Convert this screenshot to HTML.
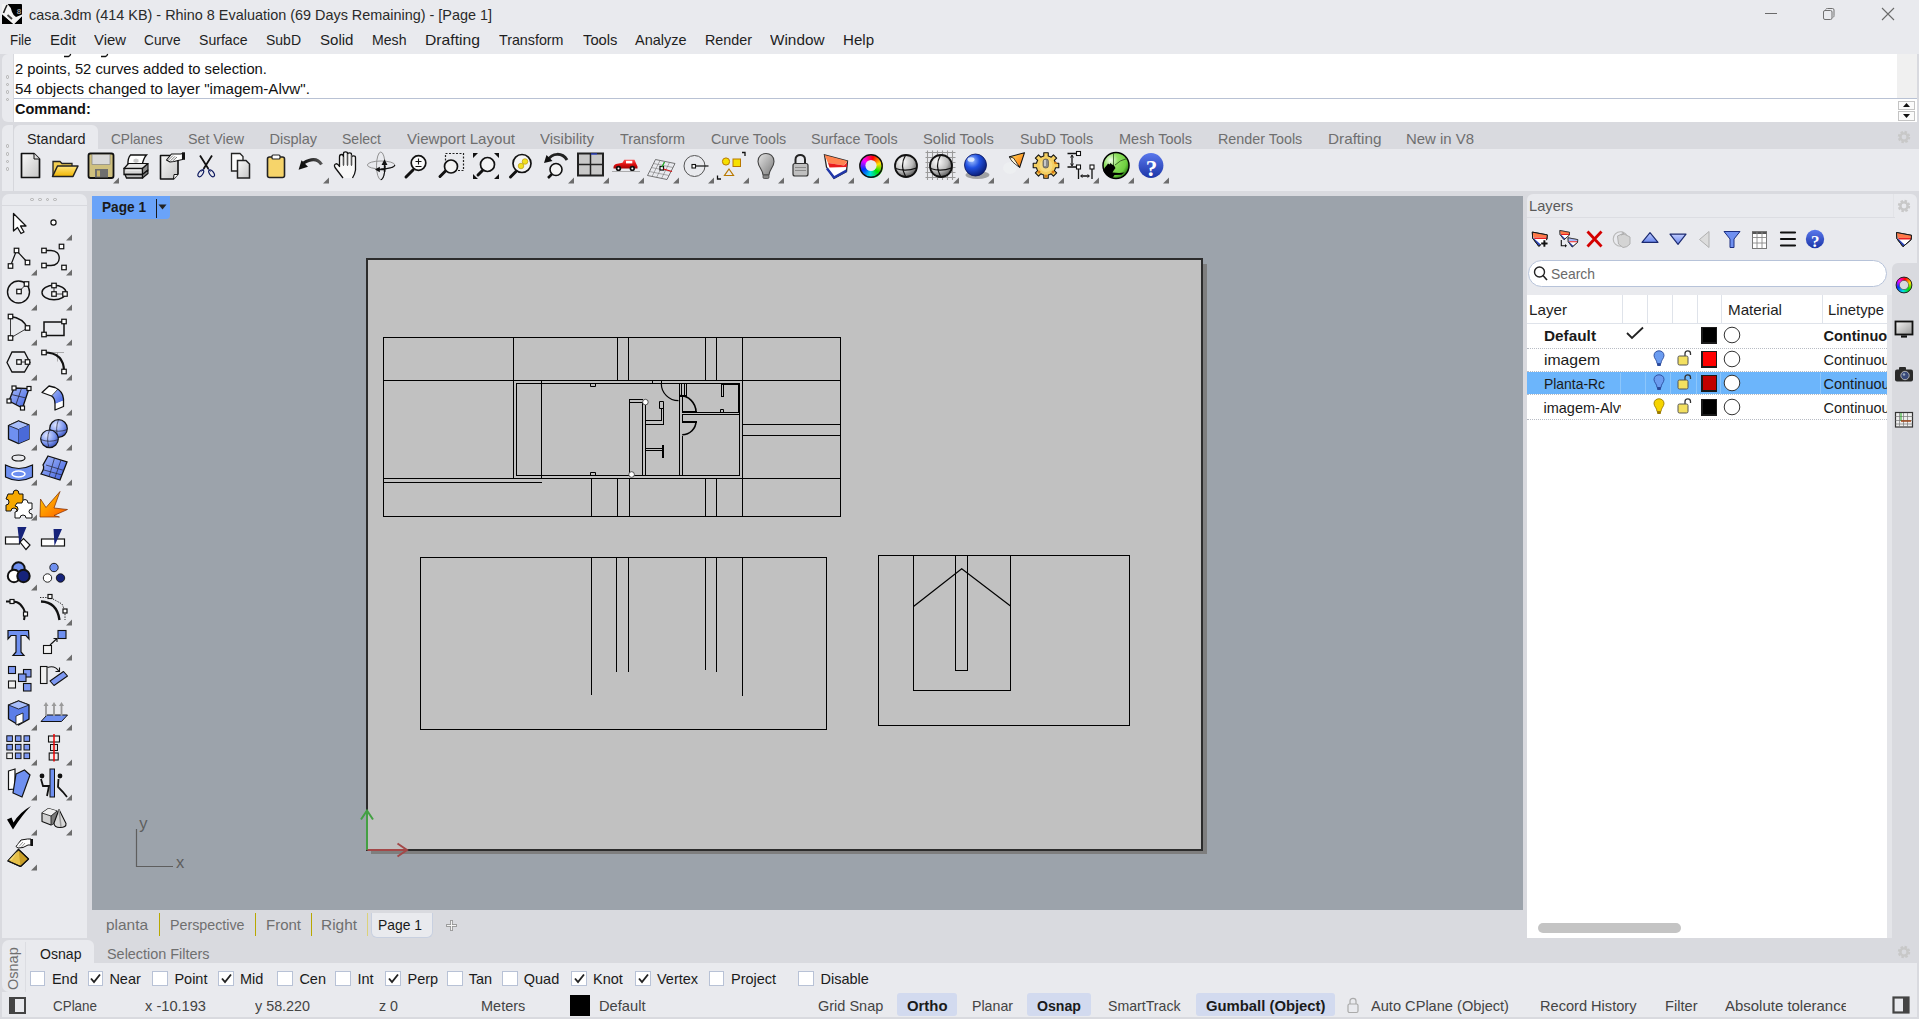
<!DOCTYPE html>
<html><head><meta charset="utf-8"><style>*{margin:0;padding:0;box-sizing:border-box}
html,body{width:1919px;height:1019px;overflow:hidden;background:#d9dadf;font-family:"Liberation Sans",sans-serif}
.a{position:absolute}
.t{position:absolute;white-space:nowrap;line-height:1;font-family:"Liberation Sans",sans-serif;transform-origin:0 0}
svg.a{overflow:visible}
#ov{position:absolute;left:0;top:0;width:1919px;height:1019px;overflow:hidden}
</style></head><body>
<div class="a" style="left:0px;top:0px;width:1919px;height:54px;background:#e9eaee;"></div>
<svg class="a" style="left:2px;top:4px;" width="20" height="20" viewBox="0 0 20 20"><rect x="0" y="0" width="20" height="20" rx="0.8" fill="#000"/>
<path d="M0 0H5.5Q9 3 10 8Q11 11 14 13L20 10.5V12.5L12.5 20H11L0 10.5Z" fill="#f4f4f4"/>
<path d="M5 1Q3 5 1.5 9" fill="none" stroke="#222" stroke-width="1.6"/>
<path d="M5.5 11L10 15" stroke="#444" stroke-width="1.8"/>
<path d="M0 10.5V20H11Z M20 12.5V20H12.5Z" fill="#000"/>
<text x="17" y="9.5" font-size="8" font-family="Liberation Sans" font-weight="bold" text-anchor="middle" fill="#9a9a9a">8</text></svg>
<div class="t" style="left:29px;top:8.00px;font-size:14.5px;color:#2a2a2a;transform:scaleX(0.994);">casa.3dm (414 KB) - Rhino 8 Evaluation (69 Days Remaining) - [Page 1]</div>
<div class="a" style="left:1765px;top:13px;width:12px;height:1.2px;background:#6a6a6a;"></div>
<svg class="a" style="left:1820px;top:6px;" width="16" height="16" viewBox="0 0 16 16"><rect x="3.5" y="4.5" width="8.5" height="9" rx="1.5" fill="none" stroke="#707070" stroke-width="1"/><path d="M5.5 3.5 Q6 2.5 7.5 2.5 H12.5 Q14 2.5 14 4 V9.5 Q14 11 13 11.5" fill="none" stroke="#707070" stroke-width="1"/></svg>
<svg class="a" style="left:1880px;top:6px;" width="16" height="16" viewBox="0 0 16 16"><path d="M2 2 L14 14 M14 2 L2 14" stroke="#6a6a6a" stroke-width="1.1"/></svg>
<div class="t" style="left:9.5px;top:32.60px;font-size:14.5px;color:#1e1e1e;transform:scaleX(0.920);">File</div>
<div class="t" style="left:50px;top:32.60px;font-size:14.5px;color:#1e1e1e;transform:scaleX(1.041);">Edit</div>
<div class="t" style="left:94px;top:32.60px;font-size:14.5px;color:#1e1e1e;transform:scaleX(1.027);">View</div>
<div class="t" style="left:144px;top:32.60px;font-size:14.5px;color:#1e1e1e;transform:scaleX(0.944);">Curve</div>
<div class="t" style="left:199px;top:32.60px;font-size:14.5px;color:#1e1e1e;transform:scaleX(0.971);">Surface</div>
<div class="t" style="left:266px;top:32.60px;font-size:14.5px;color:#1e1e1e;transform:scaleX(0.965);">SubD</div>
<div class="t" style="left:320px;top:32.60px;font-size:14.5px;color:#1e1e1e;transform:scaleX(1.039);">Solid</div>
<div class="t" style="left:372px;top:32.60px;font-size:14.5px;color:#1e1e1e;transform:scaleX(0.973);">Mesh</div>
<div class="t" style="left:425px;top:32.60px;font-size:14.5px;color:#1e1e1e;transform:scaleX(1.083);">Drafting</div>
<div class="t" style="left:498.5px;top:32.60px;font-size:14.5px;color:#1e1e1e;transform:scaleX(0.984);">Transform</div>
<div class="t" style="left:582.5px;top:32.60px;font-size:14.5px;color:#1e1e1e;transform:scaleX(1.019);">Tools</div>
<div class="t" style="left:635px;top:32.60px;font-size:14.5px;color:#1e1e1e;">Analyze</div>
<div class="t" style="left:705px;top:32.60px;font-size:14.5px;color:#1e1e1e;transform:scaleX(0.988);">Render</div>
<div class="t" style="left:770px;top:32.60px;font-size:14.5px;color:#1e1e1e;transform:scaleX(1.057);">Window</div>
<div class="t" style="left:843px;top:32.60px;font-size:14.5px;color:#1e1e1e;transform:scaleX(1.040);">Help</div>
<div class="a" style="left:0px;top:54px;width:1919px;height:69px;background:#d9dadf;"></div>
<div class="a" style="left:2px;top:54px;width:12px;height:67.5px;background:#e9eaee;border-radius:6px 0 0 6px"></div>
<div class="a" style="left:13px;top:54px;width:1px;height:67.5px;background:#d8d9de;"></div>
<div class="a" style="left:14px;top:54px;width:1883px;height:67.5px;background:#fff;"></div>
<div class="a" style="left:1897px;top:54px;width:20px;height:44px;background:#f0f0f0;"></div>
<div class="a" style="left:1897px;top:98px;width:20px;height:23.5px;background:#fff;"></div>
<div class="a" style="left:5.9px;top:75.2px;width:3.6px;height:3.6px;border:1px solid #b0b0b0;border-radius:50%"></div>
<div class="a" style="left:5.9px;top:82.7px;width:3.6px;height:3.6px;border:1px solid #b0b0b0;border-radius:50%"></div>
<div class="a" style="left:5.9px;top:90.2px;width:3.6px;height:3.6px;border:1px solid #b0b0b0;border-radius:50%"></div>
<div class="a" style="left:5.9px;top:97.7px;width:3.6px;height:3.6px;border:1px solid #b0b0b0;border-radius:50%"></div>
<svg class="a" style="left:60px;top:53px;" width="60" height="6" viewBox="0 0 60 6"><path d="M4 3.5H8.5Q10 3.2 10.7 1" stroke="#111" stroke-width="1.3" fill="none"/><path d="M41 3.5H45.5Q47 3.2 47.7 1" stroke="#111" stroke-width="1.3" fill="none"/></svg>
<div class="t" style="left:15px;top:61.50px;font-size:14.5px;color:#111;transform:scaleX(1.018);">2 points, 52 curves added to selection.</div>
<div class="t" style="left:15px;top:81.50px;font-size:14.5px;color:#111;transform:scaleX(1.043);">54 objects changed to layer &quot;imagem-Alvw&quot;.</div>
<div class="a" style="left:14px;top:98px;width:1903px;height:1px;background:#b9c2d4;"></div>
<div class="t" style="left:15px;top:102.30px;font-size:14.5px;color:#111;font-weight:bold;">Command:</div>
<div class="a" style="left:1898px;top:100.5px;width:17px;height:9px;background:#fbfbfb;border:1px solid #c4c4c4"></div>
<div class="a" style="left:1898px;top:111px;width:17px;height:9.5px;background:#fbfbfb;border:1px solid #c4c4c4"></div>
<svg class="a" style="left:1902px;top:102px;" width="9" height="6" viewBox="0 0 9 6"><path d="M1 5 L4.5 1 L8 5Z" fill="#111"/></svg>
<svg class="a" style="left:1902px;top:113px;" width="9" height="6" viewBox="0 0 9 6"><path d="M1 1 L4.5 5 L8 1Z" fill="#111"/></svg>
<div class="a" style="left:14px;top:123px;width:1905px;height:26px;background:#d9dadf;"></div>
<div class="a" style="left:2px;top:149px;width:1917px;height:42px;background:#e9eaee;"></div>
<div class="a" style="left:14px;top:125px;width:84px;height:24px;background:#e9eaee;border-radius:6px 6px 0 0"></div>
<div class="a" style="left:2px;top:124.5px;width:12px;height:66.5px;background:#e9eaee;border-radius:6px 0 0 0"></div>
<div class="a" style="left:13px;top:125px;width:1px;height:66px;background:#d6d7dc;"></div>
<div class="a" style="left:5.9px;top:144.2px;width:3.6px;height:3.6px;border:1px solid #b0b0b0;border-radius:50%"></div>
<div class="a" style="left:5.9px;top:152.2px;width:3.6px;height:3.6px;border:1px solid #b0b0b0;border-radius:50%"></div>
<div class="a" style="left:5.9px;top:159.7px;width:3.6px;height:3.6px;border:1px solid #b0b0b0;border-radius:50%"></div>
<div class="a" style="left:5.9px;top:167.2px;width:3.6px;height:3.6px;border:1px solid #b0b0b0;border-radius:50%"></div>
<div class="t" style="left:27px;top:131.50px;font-size:14.5px;color:#1e1e1e;transform:scaleX(0.994);">Standard</div>
<div class="t" style="left:111px;top:131.50px;font-size:14.5px;color:#6f6f6f;transform:scaleX(0.940);">CPlanes</div>
<div class="t" style="left:188px;top:131.50px;font-size:14.5px;color:#6f6f6f;transform:scaleX(0.983);">Set View</div>
<div class="t" style="left:269.5px;top:131.50px;font-size:14.5px;color:#6f6f6f;">Display</div>
<div class="t" style="left:342px;top:131.50px;font-size:14.5px;color:#6f6f6f;transform:scaleX(0.968);">Select</div>
<div class="t" style="left:407px;top:131.50px;font-size:14.5px;color:#6f6f6f;transform:scaleX(1.041);">Viewport Layout</div>
<div class="t" style="left:540px;top:131.50px;font-size:14.5px;color:#6f6f6f;transform:scaleX(1.036);">Visibility</div>
<div class="t" style="left:620px;top:131.50px;font-size:14.5px;color:#6f6f6f;transform:scaleX(0.992);">Transform</div>
<div class="t" style="left:710.5px;top:131.50px;font-size:14.5px;color:#6f6f6f;transform:scaleX(0.986);">Curve Tools</div>
<div class="t" style="left:811px;top:131.50px;font-size:14.5px;color:#6f6f6f;transform:scaleX(0.990);">Surface Tools</div>
<div class="t" style="left:923px;top:131.50px;font-size:14.5px;color:#6f6f6f;transform:scaleX(1.013);">Solid Tools</div>
<div class="t" style="left:1019.5px;top:131.50px;font-size:14.5px;color:#6f6f6f;transform:scaleX(0.991);">SubD Tools</div>
<div class="t" style="left:1119px;top:131.50px;font-size:14.5px;color:#6f6f6f;">Mesh Tools</div>
<div class="t" style="left:1217.5px;top:131.50px;font-size:14.5px;color:#6f6f6f;transform:scaleX(0.989);">Render Tools</div>
<div class="t" style="left:1327.5px;top:131.50px;font-size:14.5px;color:#6f6f6f;transform:scaleX(1.054);">Drafting</div>
<div class="t" style="left:1406px;top:131.50px;font-size:14.5px;color:#6f6f6f;transform:scaleX(1.029);">New in V8</div>
<svg class="a" style="left:1896px;top:129px;" width="16" height="16" viewBox="0 0 16 16"><circle cx="8" cy="8" r="4.6" fill="none" stroke="#c8c8c8" stroke-width="3.2" stroke-dasharray="2.2 1.4"/><circle cx="8" cy="8" r="3.6" fill="none" stroke="#c8c8c8" stroke-width="2.4"/></svg>
<div class="a" style="left:0px;top:191px;width:1919px;height:5px;background:#d9dadf;"></div>
<div class="a" style="left:2px;top:194px;width:85px;height:744px;background:#e9eaee;border-radius:7px 7px 0 0"></div>
<div class="a" style="left:2px;top:205px;width:85px;height:1px;background:#d8d9de;"></div>
<div class="a" style="left:30.2px;top:197.7px;width:3.6px;height:3.6px;border:1px solid #b0b0b0;border-radius:50%"></div>
<div class="a" style="left:38.2px;top:197.7px;width:3.6px;height:3.6px;border:1px solid #b0b0b0;border-radius:50%"></div>
<div class="a" style="left:45.7px;top:197.7px;width:3.6px;height:3.6px;border:1px solid #b0b0b0;border-radius:50%"></div>
<div class="a" style="left:53.2px;top:197.7px;width:3.6px;height:3.6px;border:1px solid #b0b0b0;border-radius:50%"></div>
<div class="a" style="left:92px;top:196px;width:1431px;height:714px;background:#9ca3ab;"></div>
<div class="a" style="left:1202px;top:263.5px;width:4.5px;height:590.5px;background:#7e7e7e;"></div>
<div class="a" style="left:371px;top:850.5px;width:835.5px;height:3.8px;background:#7e7e7e;"></div>
<div class="a" style="left:366px;top:258px;width:837px;height:593px;background:#c1c1c1;border:2px solid #2c2c2c"></div>
<div class="a" style="left:92px;top:196px;width:78px;height:22.5px;background:#6aa3f8;border-radius:0 0 4px 0"></div>
<div class="t" style="left:101.5px;top:199.50px;font-size:14.5px;color:#1a1a1a;font-weight:bold;transform:scaleX(0.941);">Page 1</div>
<div class="a" style="left:156px;top:198.5px;width:1.3px;height:19.5px;background:#1a1a1a;"></div>
<svg class="a" style="left:158px;top:203.5px;" width="10" height="6" viewBox="0 0 10 6"><path d="M0.5 0.5H8.5L4.5 5.5Z" fill="#222"/></svg>
<svg class="a" style="left:130px;top:815px;" width="60" height="60" viewBox="0 0 60 60"><path d="M6.5 14V51.5H43" fill="none" stroke="#5e5e5e" stroke-width="1.2"/></svg>
<div class="t" style="left:139.3px;top:815.02px;font-size:16.5px;color:#5e5e5e;">y</div>
<div class="t" style="left:176px;top:854.22px;font-size:16.5px;color:#5e5e5e;">x</div>
<div class="a" style="left:1527px;top:194px;width:390px;height:744px;background:#e9eaee;border-radius:6px 6px 0 0"></div>
<div class="a" style="left:1892px;top:263px;width:27px;height:675px;background:#d9dadf;border-radius:6px 0 0 0"></div>
<div class="t" style="left:1528.5px;top:198.50px;font-size:14.5px;color:#5a5a5a;transform:scaleX(1.011);">Layers</div>
<div class="a" style="left:1527px;top:217px;width:368px;height:1px;background:#dcdde2;"></div>
<div class="a" style="left:1893px;top:194px;width:1px;height:23px;background:#e2e3e7;"></div>
<div class="a" style="left:1527.5px;top:260px;width:359px;height:27px;background:#fff;border:1px solid #b7c3d9;border-radius:14px"></div>
<svg class="a" style="left:1533px;top:265px;" width="16" height="18" viewBox="0 0 16 18"><circle cx="6.5" cy="7" r="5" fill="none" stroke="#222" stroke-width="1.4"/><path d="M10 10.5L14 15" stroke="#222" stroke-width="1.6"/></svg>
<div class="t" style="left:1550.5px;top:266.80px;font-size:14.5px;color:#6a6a6a;transform:scaleX(0.958);">Search</div>
<div class="a" style="left:1527px;top:294.5px;width:360px;height:643px;background:#fff;"></div>
<div class="a" style="left:1887px;top:294.5px;width:5px;height:643px;background:#e4e5e9;"></div>
<div class="a" style="left:1527px;top:323px;width:360px;height:1.2px;background:#dfe3ea;"></div>
<div class="a" style="left:1621.5px;top:294.5px;width:1px;height:28.5px;background:#dfe3ea;"></div>
<div class="a" style="left:1646.6px;top:294.5px;width:1px;height:28.5px;background:#dfe3ea;"></div>
<div class="a" style="left:1671.6px;top:294.5px;width:1px;height:28.5px;background:#dfe3ea;"></div>
<div class="a" style="left:1697px;top:294.5px;width:1px;height:28.5px;background:#dfe3ea;"></div>
<div class="a" style="left:1721.2px;top:294.5px;width:1px;height:28.5px;background:#dfe3ea;"></div>
<div class="a" style="left:1821.5px;top:294.5px;width:1px;height:28.5px;background:#dfe3ea;"></div>
<div class="t" style="left:1528.5px;top:302.50px;font-size:14.5px;color:#1e1e1e;transform:scaleX(1.048);">Layer</div>
<div class="t" style="left:1728.3px;top:302.50px;font-size:14.5px;color:#1e1e1e;transform:scaleX(1.047);">Material</div>
<div class="t" style="left:1828.3px;top:302.50px;font-size:14.5px;color:#1e1e1e;transform:scaleX(1.022);">Linetype</div>
<div class="a" style="left:1527px;top:371.5px;width:360px;height:22.5px;background:#6cb5fb;"></div>
<div class="a" style="left:1620.0px;top:372.5px;width:1px;height:21px;background:#8cc6fb;"></div>
<div class="a" style="left:1645.1px;top:372.5px;width:1px;height:21px;background:#8cc6fb;"></div>
<div class="a" style="left:1670.1px;top:372.5px;width:1px;height:21px;background:#8cc6fb;"></div>
<div class="a" style="left:1695.5px;top:372.5px;width:1px;height:21px;background:#8cc6fb;"></div>
<div class="a" style="left:1719.7px;top:372.5px;width:1px;height:21px;background:#8cc6fb;"></div>
<div class="a" style="left:1820.0px;top:372.5px;width:1px;height:21px;background:#8cc6fb;"></div>
<div class="a" style="left:1527px;top:347.5px;width:360px;height:0;border-top:1px dotted #b8bcc4"></div>
<div class="a" style="left:1527px;top:371.2px;width:360px;height:0;border-top:1px dotted #b8bcc4"></div>
<div class="a" style="left:1527px;top:394.2px;width:360px;height:0;border-top:1px dotted #b8bcc4"></div>
<div class="a" style="left:1527px;top:418.5px;width:360px;height:0;border-top:1px dotted #b8bcc4"></div>
<div class="t" style="left:1543.5px;top:328.50px;font-size:14.5px;color:#1a1a1a;font-weight:bold;transform:scaleX(1.058);">Default</div>
<div class="a" style="left:1701px;top:326.5px;width:16px;height:17px;background:#1a1a1a;"></div>
<div class="a" style="left:1702.5px;top:328.0px;width:13px;height:14px;background:#000;"></div>
<svg class="a" style="left:1723px;top:325.5px;" width="18" height="18" viewBox="0 0 18 18"><circle cx="9" cy="9" r="7.8" fill="#fff" stroke="#333" stroke-width="1"/></svg>
<div class="a" style="left:1823px;top:324.5px;width:64px;height:22px;overflow:hidden"><div class="t" style="left:0.5px;top:4px;font-size:14.5px;color:#1a1a1a;font-weight:bold;">Continuous</div></div>
<div class="t" style="left:1543.5px;top:352.50px;font-size:14.5px;color:#1a1a1a;transform:scaleX(1.086);">imagem</div>
<div class="a" style="left:1701px;top:350.5px;width:16px;height:17px;background:#1a1a1a;"></div>
<div class="a" style="left:1702.5px;top:352.0px;width:13px;height:14px;background:#ff0000;"></div>
<svg class="a" style="left:1723px;top:349.5px;" width="18" height="18" viewBox="0 0 18 18"><circle cx="9" cy="9" r="7.8" fill="#fff" stroke="#333" stroke-width="1"/></svg>
<div class="a" style="left:1823px;top:348.5px;width:64px;height:22px;overflow:hidden"><div class="t" style="left:0.5px;top:4px;font-size:14.5px;color:#1a1a1a;">Continuous</div></div>
<svg class="a" style="left:1652px;top:349.5px;" width="14" height="18" viewBox="0 0 14 18"><path d="M5 13.5C5 10 2 8.5 2 5.5C2 2.5 4.3 0.8 7 0.8C9.7 0.8 12 2.5 12 5.5C12 8.5 9 10 9 13.5Z" fill="#6b9cf0" stroke="#2a4a9a" stroke-width="0.9"/><rect x="5" y="13.5" width="4" height="2.5" rx="1" fill="#2a4a9a"/></svg>
<svg class="a" style="left:1676px;top:348.5px;" width="18" height="18" viewBox="0 0 18 18"><path d="M9 7V4.5C9 1 14.5 1 14.5 4.5V6" fill="none" stroke="#333" stroke-width="1.3"/><rect x="2" y="7" width="10" height="9" rx="1.5" fill="#f3e060" stroke="#555" stroke-width="1"/></svg>
<div class="t" style="left:1543.5px;top:376.50px;font-size:14.5px;color:#1a1a1a;transform:scaleX(0.958);">Planta-Rc</div>
<div class="a" style="left:1701px;top:374.5px;width:16px;height:17px;background:#1a1a1a;"></div>
<div class="a" style="left:1702.5px;top:376.0px;width:13px;height:14px;background:#c00000;"></div>
<svg class="a" style="left:1723px;top:373.5px;" width="18" height="18" viewBox="0 0 18 18"><circle cx="9" cy="9" r="7.8" fill="#fff" stroke="#333" stroke-width="1"/></svg>
<div class="a" style="left:1823px;top:372.5px;width:64px;height:22px;overflow:hidden"><div class="t" style="left:0.5px;top:4px;font-size:14.5px;color:#1a1a1a;">Continuous</div></div>
<svg class="a" style="left:1652px;top:373.5px;" width="14" height="18" viewBox="0 0 14 18"><path d="M5 13.5C5 10 2 8.5 2 5.5C2 2.5 4.3 0.8 7 0.8C9.7 0.8 12 2.5 12 5.5C12 8.5 9 10 9 13.5Z" fill="#6b9cf0" stroke="#2a4a9a" stroke-width="0.9"/><rect x="5" y="13.5" width="4" height="2.5" rx="1" fill="#2a4a9a"/></svg>
<svg class="a" style="left:1676px;top:372.5px;" width="18" height="18" viewBox="0 0 18 18"><path d="M9 7V4.5C9 1 14.5 1 14.5 4.5V6" fill="none" stroke="#333" stroke-width="1.3"/><rect x="2" y="7" width="10" height="9" rx="1.5" fill="#f3e060" stroke="#555" stroke-width="1"/></svg>
<div class="a" style="left:1543px;top:396.5px;width:78px;height:22px;overflow:hidden"><div class="t" style="left:0.5px;top:4px;font-size:14.5px;color:#1a1a1a">imagem-Alvw</div></div>
<div class="a" style="left:1701px;top:398.5px;width:16px;height:17px;background:#1a1a1a;"></div>
<div class="a" style="left:1702.5px;top:400.0px;width:13px;height:14px;background:#000;"></div>
<svg class="a" style="left:1723px;top:397.5px;" width="18" height="18" viewBox="0 0 18 18"><circle cx="9" cy="9" r="7.8" fill="#fff" stroke="#333" stroke-width="1"/></svg>
<div class="a" style="left:1823px;top:396.5px;width:64px;height:22px;overflow:hidden"><div class="t" style="left:0.5px;top:4px;font-size:14.5px;color:#1a1a1a;">Continuous</div></div>
<svg class="a" style="left:1652px;top:397.5px;" width="14" height="18" viewBox="0 0 14 18"><path d="M5 13.5C5 10 2 8.5 2 5.5C2 2.5 4.3 0.8 7 0.8C9.7 0.8 12 2.5 12 5.5C12 8.5 9 10 9 13.5Z" fill="#f6d400" stroke="#9a7a00" stroke-width="0.9"/><rect x="5" y="13.5" width="4" height="2.5" rx="1" fill="#9a7a00"/></svg>
<svg class="a" style="left:1676px;top:396.5px;" width="18" height="18" viewBox="0 0 18 18"><path d="M9 7V4.5C9 1 14.5 1 14.5 4.5V6" fill="none" stroke="#333" stroke-width="1.3"/><rect x="2" y="7" width="10" height="9" rx="1.5" fill="#f3e060" stroke="#555" stroke-width="1"/></svg>
<div class="a" style="left:1621.5px;top:395px;width:0.01px;height:0.01px;background:transparent;"></div>
<svg class="a" style="left:1626px;top:402.5px;" width="0" height="0" viewBox="0 0 0 0"></svg>
<svg class="a" style="left:1626px;top:326px;" width="18" height="14" viewBox="0 0 18 14"><path d="M1 7L6 12L17 1.5" fill="none" stroke="#222" stroke-width="1.8"/></svg>
<div class="a" style="left:1538px;top:923px;width:143px;height:9.5px;background:#c4c4c4;border-radius:5px"></div>
<div class="a" style="left:371px;top:912.5px;width:62px;height:25px;background:#e9eaee;border-radius:0 0 6px 6px;border:1px solid #c8d0e0;border-top:none"></div>
<div class="t" style="left:106px;top:917.50px;font-size:14.5px;color:#6f6f6f;transform:scaleX(1.063);">planta</div>
<div class="t" style="left:169.5px;top:917.50px;font-size:14.5px;color:#6f6f6f;transform:scaleX(0.983);">Perspective</div>
<div class="t" style="left:266px;top:917.50px;font-size:14.5px;color:#6f6f6f;transform:scaleX(1.034);">Front</div>
<div class="t" style="left:321px;top:917.50px;font-size:14.5px;color:#6f6f6f;transform:scaleX(1.064);">Right</div>
<div class="t" style="left:378px;top:917.50px;font-size:14.5px;color:#1a1a1a;transform:scaleX(0.957);">Page 1</div>
<div class="a" style="left:158.5px;top:913px;width:1px;height:23px;background:#b8a800;"></div>
<div class="a" style="left:255px;top:913px;width:1px;height:23px;background:#b8a800;"></div>
<div class="a" style="left:310.5px;top:913px;width:1px;height:23px;background:#b8a800;"></div>
<div class="a" style="left:367.3px;top:913px;width:1px;height:23px;background:#dcd27a;"></div>
<svg class="a" style="left:445px;top:919px;" width="13" height="13" viewBox="0 0 13 13"><path d="M6.5 1V12M1 6.5H12" stroke="#888" stroke-width="2.6"/><path d="M6.5 1.8V11.2M1.8 6.5H11.2" stroke="#f4f4f4" stroke-width="1.2"/></svg>
<div class="a" style="left:2px;top:940px;width:1917px;height:52px;background:#d9dadf;"></div>
<div class="a" style="left:2px;top:940px;width:23px;height:51.5px;background:#e9eaee;border-radius:7px 0 0 7px"></div>
<div class="a" style="left:25px;top:963px;width:1892px;height:29px;background:#e9eaee;"></div>
<div class="a" style="left:25px;top:940px;width:69px;height:23px;background:#e9eaee;border-radius:0 6px 0 0"></div>
<div class="a" style="left:25px;top:942px;width:1px;height:49.5px;background:#dcdde2;"></div>
<div class="t" style="left:6px;top:990px;font-size:14.5px;color:#6f6f6f;transform:rotate(-90deg);transform-origin:0 0">Osnap</div>
<div class="t" style="left:39.5px;top:946.50px;font-size:14.5px;color:#1a1a1a;transform:scaleX(0.971);">Osnap</div>
<div class="t" style="left:107px;top:946.50px;font-size:14.5px;color:#6f6f6f;transform:scaleX(0.994);">Selection Filters</div>
<div class="a" style="left:29.5px;top:971px;width:15.5px;height:15px;background:#fff;border:1px solid #b8c2d6"></div>
<div class="t" style="left:51.9px;top:971.50px;font-size:14.5px;color:#1a1a1a;">End</div>
<div class="a" style="left:87.5px;top:971px;width:15.5px;height:15px;background:#fff;border:1px solid #b8c2d6"></div>
<svg class="a" style="left:90.0px;top:973px;" width="11" height="11" viewBox="0 0 11 11"><path d="M1 5.5L4 9L10 1.5" fill="none" stroke="#222" stroke-width="1.9"/></svg>
<div class="t" style="left:109.4px;top:971.50px;font-size:14.5px;color:#1a1a1a;">Near</div>
<div class="a" style="left:152px;top:971px;width:15.5px;height:15px;background:#fff;border:1px solid #b8c2d6"></div>
<div class="t" style="left:174.4px;top:971.50px;font-size:14.5px;color:#1a1a1a;">Point</div>
<div class="a" style="left:218px;top:971px;width:15.5px;height:15px;background:#fff;border:1px solid #b8c2d6"></div>
<svg class="a" style="left:220.5px;top:973px;" width="11" height="11" viewBox="0 0 11 11"><path d="M1 5.5L4 9L10 1.5" fill="none" stroke="#222" stroke-width="1.9"/></svg>
<div class="t" style="left:240px;top:971.50px;font-size:14.5px;color:#1a1a1a;">Mid</div>
<div class="a" style="left:277px;top:971px;width:15.5px;height:15px;background:#fff;border:1px solid #b8c2d6"></div>
<div class="t" style="left:299.4px;top:971.50px;font-size:14.5px;color:#1a1a1a;">Cen</div>
<div class="a" style="left:335px;top:971px;width:15.5px;height:15px;background:#fff;border:1px solid #b8c2d6"></div>
<div class="t" style="left:357.5px;top:971.50px;font-size:14.5px;color:#1a1a1a;">Int</div>
<div class="a" style="left:385px;top:971px;width:15.5px;height:15px;background:#fff;border:1px solid #b8c2d6"></div>
<svg class="a" style="left:387.5px;top:973px;" width="11" height="11" viewBox="0 0 11 11"><path d="M1 5.5L4 9L10 1.5" fill="none" stroke="#222" stroke-width="1.9"/></svg>
<div class="t" style="left:407.5px;top:971.50px;font-size:14.5px;color:#1a1a1a;">Perp</div>
<div class="a" style="left:447px;top:971px;width:15.5px;height:15px;background:#fff;border:1px solid #b8c2d6"></div>
<div class="t" style="left:468.75px;top:971.50px;font-size:14.5px;color:#1a1a1a;">Tan</div>
<div class="a" style="left:502px;top:971px;width:15.5px;height:15px;background:#fff;border:1px solid #b8c2d6"></div>
<div class="t" style="left:523.75px;top:971.50px;font-size:14.5px;color:#1a1a1a;">Quad</div>
<div class="a" style="left:571px;top:971px;width:15.5px;height:15px;background:#fff;border:1px solid #b8c2d6"></div>
<svg class="a" style="left:573.5px;top:973px;" width="11" height="11" viewBox="0 0 11 11"><path d="M1 5.5L4 9L10 1.5" fill="none" stroke="#222" stroke-width="1.9"/></svg>
<div class="t" style="left:593px;top:971.50px;font-size:14.5px;color:#1a1a1a;">Knot</div>
<div class="a" style="left:635px;top:971px;width:15.5px;height:15px;background:#fff;border:1px solid #b8c2d6"></div>
<svg class="a" style="left:637.5px;top:973px;" width="11" height="11" viewBox="0 0 11 11"><path d="M1 5.5L4 9L10 1.5" fill="none" stroke="#222" stroke-width="1.9"/></svg>
<div class="t" style="left:657px;top:971.50px;font-size:14.5px;color:#1a1a1a;">Vertex</div>
<div class="a" style="left:708.75px;top:971px;width:15.5px;height:15px;background:#fff;border:1px solid #b8c2d6"></div>
<div class="t" style="left:731px;top:971.50px;font-size:14.5px;color:#1a1a1a;">Project</div>
<div class="a" style="left:798px;top:971px;width:15.5px;height:15px;background:#fff;border:1px solid #b8c2d6"></div>
<div class="t" style="left:820.5px;top:971.50px;font-size:14.5px;color:#1a1a1a;">Disable</div>
<div class="a" style="left:2px;top:992px;width:1915px;height:25px;background:#e9eaee;"></div>
<svg class="a" style="left:9px;top:997px;" width="18" height="18" viewBox="0 0 18 18"><rect x="1" y="1" width="15" height="15" fill="none" stroke="#444" stroke-width="2"/><rect x="1" y="1" width="5" height="15" fill="#444"/></svg>
<div class="t" style="left:52.5px;top:998.50px;font-size:14.5px;color:#444;transform:scaleX(0.925);">CPlane</div>
<div class="t" style="left:144.5px;top:998.50px;font-size:14.5px;color:#444;transform:scaleX(1.009);">x -10.193</div>
<div class="t" style="left:254.5px;top:998.50px;font-size:14.5px;color:#444;transform:scaleX(0.989);">y 58.220</div>
<div class="t" style="left:379px;top:998.50px;font-size:14.5px;color:#444;transform:scaleX(0.982);">z 0</div>
<div class="t" style="left:481px;top:998.50px;font-size:14.5px;color:#444;">Meters</div>
<div class="a" style="left:570px;top:995px;width:20px;height:20.5px;background:#000;"></div>
<div class="t" style="left:599px;top:998.50px;font-size:14.5px;color:#444;transform:scaleX(1.012);">Default</div>
<div class="t" style="left:818px;top:998.50px;font-size:14.5px;color:#444;">Grid Snap</div>
<div class="a" style="left:897px;top:993px;width:59.5px;height:23px;background:#d2daef;border-radius:3px"></div>
<div class="t" style="left:907px;top:998.50px;font-size:14.5px;color:#1a1a1a;font-weight:bold;transform:scaleX(1.026);">Ortho</div>
<div class="t" style="left:972px;top:998.50px;font-size:14.5px;color:#444;transform:scaleX(0.978);">Planar</div>
<div class="a" style="left:1027px;top:993px;width:64px;height:23px;background:#d2daef;border-radius:3px"></div>
<div class="t" style="left:1037px;top:998.50px;font-size:14.5px;color:#1a1a1a;font-weight:bold;transform:scaleX(0.975);">Osnap</div>
<div class="t" style="left:1107.7px;top:998.50px;font-size:14.5px;color:#444;transform:scaleX(0.975);">SmartTrack</div>
<div class="a" style="left:1196px;top:993px;width:139px;height:23px;background:#d2daef;border-radius:3px"></div>
<div class="t" style="left:1205.6px;top:998.50px;font-size:14.5px;color:#1a1a1a;font-weight:bold;transform:scaleX(1.023);">Gumball (Object)</div>
<svg class="a" style="left:1346px;top:996px;" width="14" height="18" viewBox="0 0 14 18"><path d="M4 8V5C4 1.5 10 1.5 10 5V8" fill="none" stroke="#aaa" stroke-width="1.2"/><rect x="2" y="8" width="10" height="8.5" rx="1.5" fill="none" stroke="#aaa" stroke-width="1.2"/></svg>
<div class="t" style="left:1371px;top:998.50px;font-size:14.5px;color:#444;transform:scaleX(1.007);">Auto CPlane (Object)</div>
<div class="t" style="left:1540px;top:998.50px;font-size:14.5px;color:#444;transform:scaleX(1.006);">Record History</div>
<div class="t" style="left:1665px;top:998.50px;font-size:14.5px;color:#444;transform:scaleX(1.009);">Filter</div>
<div class="t" style="left:1725px;top:998.50px;font-size:14.5px;color:#444;transform:scaleX(1.032);clip-path:inset(0 3px 0 0);">Absolute tolerance</div>
<svg class="a" style="left:1892px;top:996px;" width="19" height="19" viewBox="0 0 19 19"><rect x="1.5" y="1.5" width="15" height="15" fill="none" stroke="#444" stroke-width="2.2"/><rect x="11" y="1.5" width="5.5" height="15" fill="#444"/></svg>
<svg class="a" style="left:1896px;top:198px;" width="16" height="16" viewBox="0 0 16 16"><circle cx="8" cy="8" r="4.6" fill="none" stroke="#c8c8c8" stroke-width="3.2" stroke-dasharray="2.2 1.4"/><circle cx="8" cy="8" r="3.6" fill="none" stroke="#c8c8c8" stroke-width="2.4"/></svg>
<svg class="a" style="left:1896px;top:944px;" width="16" height="16" viewBox="0 0 16 16"><circle cx="8" cy="8" r="4.6" fill="none" stroke="#c8c8c8" stroke-width="3.2" stroke-dasharray="2.2 1.4"/><circle cx="8" cy="8" r="3.6" fill="none" stroke="#c8c8c8" stroke-width="2.4"/></svg>
<div class="a" style="left:859.5px;top:154.5px;width:23px;height:23px;border-radius:50%;background:conic-gradient(from 10deg,#ff0000,#ffe000,#00e000,#00e0e0,#0030ff,#ff00ff,#ff0000)"></div>
<div class="a" style="left:1896px;top:277px;width:16px;height:16px;border-radius:50%;background:conic-gradient(from 10deg,#ff0000,#ffe000,#00e000,#00e0e0,#0030ff,#ff00ff,#ff0000)"></div>
<svg id="ov" width="1919" height="1019" viewBox="0 0 1919 1019"><defs>
<linearGradient id="gpage" x1="0" y1="0" x2="1" y2="1"><stop offset="0" stop-color="#fafafa"/><stop offset="1" stop-color="#c4c4c4"/></linearGradient>
<linearGradient id="gyel" x1="0" y1="0" x2="0" y2="1"><stop offset="0" stop-color="#ffe680"/><stop offset="1" stop-color="#f0b400"/></linearGradient>
<linearGradient id="gblue" x1="0" y1="0" x2="1" y2="1"><stop offset="0" stop-color="#a9bdfb"/><stop offset="1" stop-color="#3c5ee0"/></linearGradient>
<radialGradient id="gsph" cx="0.35" cy="0.3" r="0.75"><stop offset="0" stop-color="#fff"/><stop offset="0.6" stop-color="#bbb"/><stop offset="1" stop-color="#555"/></radialGradient>
<radialGradient id="gbsph" cx="0.35" cy="0.3" r="0.75"><stop offset="0" stop-color="#9fc0ff"/><stop offset="0.45" stop-color="#2050e0"/><stop offset="1" stop-color="#081a70"/></radialGradient>
<radialGradient id="gbs2" cx="0.35" cy="0.3" r="0.75"><stop offset="0" stop-color="#dfe6ff"/><stop offset="0.6" stop-color="#7f99f0"/><stop offset="1" stop-color="#3950b8"/></radialGradient>
<radialGradient id="ggreen" cx="0.4" cy="0.35" r="0.7"><stop offset="0" stop-color="#c8f59a"/><stop offset="0.6" stop-color="#6cc832"/><stop offset="1" stop-color="#2b6a10"/></radialGradient>
<radialGradient id="ghelp" cx="0.4" cy="0.3" r="0.7"><stop offset="0" stop-color="#7d9cf0"/><stop offset="1" stop-color="#1f3fae"/></radialGradient>
<linearGradient id="gbulb" x1="0" y1="0" x2="1" y2="1"><stop offset="0" stop-color="#e6e6e6"/><stop offset="1" stop-color="#7a7a7a"/></linearGradient>
<linearGradient id="gyb" x1="0" y1="0" x2="1" y2="1"><stop offset="0" stop-color="#fff7a0"/><stop offset="1" stop-color="#e0c000"/></linearGradient>
<linearGradient id="gorange" x1="0" y1="0" x2="1" y2="1"><stop offset="0" stop-color="#ffd000"/><stop offset="1" stop-color="#ff5a00"/></linearGradient>
<pattern id="pgrid" x="925" y="150" width="5" height="5" patternUnits="userSpaceOnUse"><path d="M0 2.5H5M2.5 0V5" stroke="#9a9a9a" stroke-width="1.1"/></pattern>
</defs><path d="M21.5 153.5H34L39.5 159V177.5H21.5Z" fill="url(#gpage)" stroke="#111" stroke-width="1.7" stroke-linejoin="round"/><path d="M34 153.5V159H39.5" fill="#ddd" stroke="#111" stroke-width="1"/><path d="M53 176V161.5H60L62 163.5H72V167" fill="#f3cf52" stroke="#222" stroke-width="1.3"/><path d="M52.5 176.5L57.5 166H78L73 176.5Z" fill="url(#gyel)" stroke="#222" stroke-width="1.5" stroke-linejoin="round"/><rect x="88.5" y="153.5" width="25" height="24.5" rx="2" fill="#cfc07e" stroke="#111" stroke-width="1.8"/><rect x="92" y="154.5" width="18" height="10" fill="#d9d9d9" stroke="#777" stroke-width="0.6"/><rect x="95" y="169" width="13" height="8.5" fill="#6f6f6f"/><rect x="97" y="170.5" width="3" height="6" fill="#c9b56a"/><path d="M119 183.5 H113 L119 177.5Z" fill="#6d6d6d"/><path d="M128 165.5Q127.5 158 130.5 155H146.5Q143.5 158 142 165.5Z" fill="#fff" stroke="#111" stroke-width="1.3"/><path d="M133.5 159.5L136 158.5L138.5 159.5V162L136 163L133.5 162Z" fill="#c8c8c8"/><path d="M124 168.5L128.5 163.5H148L142.5 168.5Z" fill="#e6e6e6" stroke="#111" stroke-width="1.2" stroke-linejoin="round"/><path d="M124 168.5H142.5V174.5H124Z" fill="#d6d6d6" stroke="#111" stroke-width="1.3"/><path d="M142.5 168.5L148 163.5V170L142.5 174.5Z" fill="#8a8a8a" stroke="#111" stroke-width="1.1" stroke-linejoin="round"/><path d="M125 174.5H142.5V178H126.5Z" fill="#bdbdbd" stroke="#111" stroke-width="1.3"/><path d="M142.5 174.5L148 170V173.5L142.5 178Z" fill="#7a7a7a" stroke="#111" stroke-width="1.1" stroke-linejoin="round"/><path d="M126 170H141" stroke="#fff" stroke-width="0.8"/><path d="M160.5 155.5H178V174L173.5 179H160.5Z" fill="url(#gpage)" stroke="#111" stroke-width="1.6" stroke-linejoin="round"/><path d="M173.5 179L174 174.5H178" fill="#fff" stroke="#111" stroke-width="1"/><path d="M166.5 160L171.5 154H180.5L182.5 153.5V159.5L178 160.5L174 161.5L170 162Z" fill="#fff" stroke="#111" stroke-width="1.1" stroke-linejoin="round"/><path d="M168.5 160L173 155.5M170.5 160.8L175 156.3M172.5 161.2L177 157" stroke="#666" stroke-width="0.9"/><rect x="182" y="152.3" width="3" height="7.5" fill="#111"/><path d="M200 155.5L208.5 169M212 155.5L203.5 169" stroke="#111" stroke-width="1.8"/><path d="M208 168.5L210.5 171.5M204 168.5L201.5 171.5" stroke="#0e1a60" stroke-width="1"/><ellipse cx="200.8" cy="173.3" rx="3.9" ry="2.1" transform="rotate(-55 200.8 173.3)" fill="none" stroke="#0e1a60" stroke-width="1.2"/><ellipse cx="211.6" cy="173.3" rx="3.9" ry="2.1" transform="rotate(55 211.6 173.3)" fill="none" stroke="#0e1a60" stroke-width="1.2"/><path d="M231.5 153.5H240L243 156.5V171H231.5Z" fill="#fafafa" stroke="#222" stroke-width="1.3"/><path d="M237.5 160.5H246L249.5 164V178H237.5Z" fill="url(#gpage)" stroke="#222" stroke-width="1.5"/><rect x="267.5" y="157" width="17" height="20.5" rx="2" fill="#f6d46a" stroke="#222" stroke-width="1.6"/><rect x="272" y="155" width="8" height="4" rx="1" fill="#fff" stroke="#222" stroke-width="1.2"/><defs><linearGradient id="gund" x1="0" y1="0" x2="1" y2="0"><stop offset="0" stop-color="#111"/><stop offset="1" stop-color="#555"/></linearGradient></defs><path d="M321.5 164.5Q316 155.5 303.5 163" fill="none" stroke="url(#gund)" stroke-width="3.2"/><path d="M298.6 169.8L301.5 160.2L308 166.8Z" fill="#111"/><path d="M329 183.5 H323 L329 177.5Z" fill="#6d6d6d"/><path d="M343 178L335 167.5Q333.5 164.5 336 163.8Q337.5 163.5 339.5 166.5V157Q339.5 154.5 341.5 154.5Q343.5 154.5 343.5 157V165V153.5Q343.5 151.8 345.5 151.8Q347.5 151.8 347.5 153.5V165V154.5Q347.5 152.8 349.5 152.8Q351.5 152.8 351.5 154.5V165V157.5Q351.5 155.8 353.5 155.8Q355.5 155.8 355.5 157.5V170Q355 174 352.5 178" fill="#f8f8f8" stroke="#111" stroke-width="1.3" stroke-linejoin="round"/><path d="M343.5 157V165M347.5 154V165M351.5 155V165" stroke="#555" stroke-width="1.2"/><ellipse cx="381.1" cy="165" rx="13.7" ry="4" fill="none" stroke="#888" stroke-width="0.9"/><ellipse cx="380.8" cy="165.8" rx="4.3" ry="13.8" fill="none" stroke="#888" stroke-width="0.9"/><path d="M381.1 169A13.7 4 0 0 0 394.8 165" fill="none" stroke="#111" stroke-width="1.1"/><path d="M380.8 179.6A4.3 13.8 0 0 0 385.1 165.8" fill="none" stroke="#111" stroke-width="1.1"/><path d="M384.5 172V162M385 169.5H378" stroke="#111" stroke-width="1.4"/><path d="M381.5 165L384.5 159.2L387.5 165Z M375 169.5L379.8 166.8V172.2Z" fill="#111"/><path d="M406 177L413 170" stroke="#111" stroke-width="3" stroke-linecap="round"/><circle cx="418.5" cy="163" r="7.3" fill="#fafafa" stroke="#111" stroke-width="1.7"/><path d="M415.5 161.5H421.5M418.5 158.5V164.5M415.5 166.5H421.5" stroke="#111" stroke-width="1.1"/><rect x="445.5" y="153.5" width="18" height="17" fill="none" stroke="#222" stroke-width="1.2" stroke-dasharray="2 1.5"/><path d="M440 176.5L446 170.5" stroke="#111" stroke-width="3" stroke-linecap="round"/><circle cx="451" cy="166.5" r="6.5" fill="#f4f4f4" stroke="#111" stroke-width="1.7"/><path d="M473 153H478L473 158Z M499 153H494L499 158Z M473 179H478L473 174Z M499 179H494L499 174Z" fill="#111"/><path d="M478 175L483.5 169.5" stroke="#111" stroke-width="3" stroke-linecap="round"/><circle cx="487.5" cy="164.5" r="7" fill="#f4f4f4" stroke="#111" stroke-width="1.7"/><path d="M510.5 177L516 171.5" stroke="#111" stroke-width="3" stroke-linecap="round"/><circle cx="522" cy="163.5" r="9" fill="#f4f4f4" stroke="#111" stroke-width="1.7"/><circle cx="521" cy="166" r="2.8" fill="#f2e020" stroke="#b09000" stroke-width="0.6"/><circle cx="525" cy="161.5" r="2.8" fill="#f2e020" stroke="#b09000" stroke-width="0.6"/><path d="M567 160C562 152 552 153 548 160" fill="none" stroke="#222" stroke-width="3"/><path d="M544 163L546.5 155L552.5 161Z" fill="#111"/><path d="M548 178L552 174" stroke="#111" stroke-width="2.5"/><circle cx="556" cy="169.5" r="6" fill="#f4f4f4" stroke="#111" stroke-width="1.6"/><path d="M574 183.5 H568 L574 177.5Z" fill="#6d6d6d"/><rect x="578" y="153.5" width="25" height="22" fill="#c8c8c8" stroke="#222" stroke-width="2"/><path d="M590.5 153.5V175.5M578 164.5H603" stroke="#222" stroke-width="1.5"/><path d="M591 154H597" stroke="#2a4aff" stroke-width="1"/><path d="M609 183.5 H603 L609 177.5Z" fill="#6d6d6d"/><defs><linearGradient id="gcar" x1="0" y1="0" x2="0" y2="1"><stop offset="0" stop-color="#ff5050"/><stop offset="0.5" stop-color="#e01010"/><stop offset="1" stop-color="#a00000"/></linearGradient></defs><path d="M613.5 168.5Q613 165 616 164L622.5 162.8L624.2 159.8H634.5L636.2 163.8L637.5 166.5V168.5Z" fill="url(#gcar)"/><rect x="626" y="160.8" width="6.3" height="2.6" fill="#fff"/><circle cx="618.5" cy="168.4" r="2.7" fill="#111"/><circle cx="618.5" cy="168.4" r="1" fill="#fff"/><circle cx="632.3" cy="168.4" r="2.7" fill="#111"/><circle cx="632.3" cy="168.4" r="1" fill="#fff"/><path d="M612 171.5H640" stroke="#9a9a9a" stroke-width="0.8"/><path d="M644 183.5 H638 L644 177.5Z" fill="#6d6d6d"/><path d="M655.5 159.5L675 163.5L667 179.5L647.5 175.5Z" fill="none" stroke="#555" stroke-width="0.8"/><path d="M660 160.5L652 176.5M664.5 161.5L656.5 177.5M669.5 162.5L661.5 178.5M653.5 163.5L673 167.5M651.5 167.5L671 171.5M649.5 171.5L669 175.5" stroke="#777" stroke-width="0.6"/><rect x="660" y="166.5" width="3.5" height="3.5" fill="#fff" stroke="#111" stroke-width="1.2"/><path d="M662 167L664.5 162" stroke="#2a2" stroke-width="1.3"/><path d="M663.5 169L672 171.5" stroke="#d11" stroke-width="1.3"/><path d="M679 183.5 H673 L679 177.5Z" fill="#6d6d6d"/><circle cx="694.5" cy="166" r="10.5" fill="none" stroke="#555" stroke-width="1"/><rect x="692" y="164.5" width="3.5" height="3.5" fill="#fff" stroke="#111" stroke-width="1.1"/><path d="M695.5 166H708.5" stroke="#111" stroke-width="1.2"/><path d="M714 183.5 H708 L714 177.5Z" fill="#6d6d6d"/><circle cx="726" cy="161.5" r="3.6" fill="#f6e000" stroke="#b87800" stroke-width="1"/><rect x="733" y="159" width="7.5" height="7.5" fill="#f6e000" stroke="#b87800" stroke-width="1"/><path d="M729 169L733.5 175.5H724.5Z" fill="none" stroke="#b87800" stroke-width="1.2"/><path d="M742 152.5H745V156M717.5 175.5V179H721" fill="none" stroke="#111" stroke-width="1.3"/><path d="M749 183.5 H743 L749 177.5Z" fill="#6d6d6d"/><path d="M763 175C763 170 758 167 758 161.5C758 156 762 153.5 766 153.5C770 153.5 774 156 774 161.5C774 167 769 170 769 175Z" fill="url(#gbulb)" stroke="#444" stroke-width="1.1"/><rect x="763" y="175" width="6" height="3.5" rx="1.2" fill="#888" stroke="#444" stroke-width="0.8"/><path d="M784 183.5 H778 L784 177.5Z" fill="#6d6d6d"/><path d="M795.5 164V159.5C795.5 153.5 805 153.5 805 159.5V164" fill="none" stroke="#222" stroke-width="2"/><rect x="793" y="163.5" width="15" height="12.5" rx="2" fill="#c0c0c0" stroke="#333" stroke-width="1.2"/><path d="M795 167.5H806M795 170.5H806" stroke="#8a8a8a" stroke-width="1"/><path d="M819 183.5 H813 L819 177.5Z" fill="#6d6d6d"/><path d="M824.5 155L847.5 161L846.5 171.5L834 178.5L826.5 167Z" fill="#fff" stroke="#222" stroke-width="1.3"/><path d="M824.5 155L847.5 161L844 165.5L828 163Z" fill="#ff8450"/><path d="M828 163L844 165.5L847 162.5L846.8 167L829.5 167.5Z" fill="#e81c1c"/><path d="M827 168.5L834 177.5L846.5 170.5V172L834 178.8L826.5 167Z" fill="#2238a8"/><path d="M827 168.5L834 177.5L846.5 170.5" fill="none" stroke="#2238a8" stroke-width="2.4"/><path d="M854 183.5 H848 L854 177.5Z" fill="#6d6d6d"/><circle cx="871" cy="166" r="11.2" fill="none" stroke="#111" stroke-width="1.4"/><circle cx="871" cy="165.5" r="5.6" fill="#e9eaee"/><path d="M889 183.5 H883 L889 177.5Z" fill="#6d6d6d"/><circle cx="906" cy="166" r="11" fill="url(#gsph)" stroke="#111" stroke-width="1.8"/><path d="M895.5 168.5Q906 172 916.5 168M905.5 155.3Q899.5 165.5 905.6 176.5" fill="none" stroke="#111" stroke-width="1.2"/><rect x="925.5" y="150.5" width="30" height="29.5" fill="url(#pgrid)"/><circle cx="941" cy="166" r="11" fill="url(#gsph)" stroke="#111" stroke-width="1.8"/><path d="M930.5 168.5Q941 172 951.5 168M940.5 155.3Q934.5 165.5 940.6 176.5" fill="none" stroke="#111" stroke-width="1.2"/><path d="M959 183.5 H953 L959 177.5Z" fill="#6d6d6d"/><ellipse cx="977.5" cy="175" rx="12" ry="4" fill="#666" opacity="0.55"/><circle cx="975.5" cy="165" r="11" fill="url(#gbsph)" stroke="#08125a" stroke-width="0.8"/><ellipse cx="971" cy="159.5" rx="3.5" ry="2.3" fill="#e8f0ff" opacity="0.85"/><path d="M994 183.5 H988 L994 177.5Z" fill="#6d6d6d"/><ellipse cx="1010" cy="168" rx="7" ry="6" fill="#f0f1f4" opacity="0.6"/><defs><linearGradient id="gcone" x1="0" y1="0" x2="1" y2="1"><stop offset="0" stop-color="#ffe060"/><stop offset="1" stop-color="#ff6a00"/></linearGradient></defs><path d="M1009.5 156.8L1024.5 152.7L1019.7 167.3Z" fill="url(#gcone)" stroke="#111" stroke-width="1.1" stroke-linejoin="round"/><path d="M1009.5 156.8Q1011 162 1019.7 167.3L1013.5 158Z" fill="#fff4d8" stroke="#111" stroke-width="0.8"/><path d="M1029 183.5 H1023 L1029 177.5Z" fill="#6d6d6d"/><polygon points="1042.25,156.45 1043.80,155.95 1043.74,152.70 1048.26,152.70 1048.20,155.95 1049.75,156.45 1051.19,157.19 1053.46,154.85 1056.65,158.04 1054.31,160.31 1055.05,161.75 1055.55,163.30 1058.80,163.24 1058.80,167.76 1055.55,167.70 1055.05,169.25 1054.31,170.69 1056.65,172.96 1053.46,176.15 1051.19,173.81 1049.75,174.55 1048.20,175.05 1048.26,178.30 1043.74,178.30 1043.80,175.05 1042.25,174.55 1040.81,173.81 1038.54,176.15 1035.35,172.96 1037.69,170.69 1036.95,169.25 1036.45,167.70 1033.20,167.76 1033.20,163.24 1036.45,163.30 1036.95,161.75 1037.69,160.31 1035.35,158.04 1038.54,154.85 1040.81,157.19" fill="#f4cf62" stroke="#111" stroke-width="1.1" stroke-linejoin="round"/><circle cx="1046" cy="165.5" r="6.5" fill="#f7da80"/><circle cx="1039" cy="172" r="1.5" fill="#d87a10"/><circle cx="1053" cy="172" r="1.5" fill="#d87a10"/><circle cx="1046" cy="176" r="1.5" fill="#d87a10"/><circle cx="1055.5" cy="163" r="1.3" fill="#d87a10"/><rect x="1043" y="159" width="5.5" height="9" rx="2.5" fill="#8a8a8a" stroke="#444" stroke-width="0.6"/><rect x="1044" y="160" width="2" height="6" fill="#c8c8c8"/><path d="M1064 183.5 H1058 L1064 177.5Z" fill="#6d6d6d"/><path d="M1067.5 153.5H1076.5M1067.5 167H1076.5M1078.5 167V179M1092 167V179M1072 155.5V165.5M1081 176H1089" stroke="#111" stroke-width="1.3"/><rect x="1076.5" y="151.5" width="4" height="4" fill="#fff" stroke="#111" stroke-width="1.1"/><rect x="1076.5" y="165" width="4" height="4" fill="#fff" stroke="#111" stroke-width="1.1"/><rect x="1090" y="165" width="4" height="4" fill="#fff" stroke="#111" stroke-width="1.1"/><path d="M1070.5 157.5L1072 155L1073.5 157.5M1070.5 163.5L1072 166L1073.5 163.5M1082.5 174.5L1080.5 176L1082.5 177.5M1087.5 174.5L1089.5 176L1087.5 177.5" fill="none" stroke="#111" stroke-width="0.9"/><path d="M1099 183.5 H1093 L1099 177.5Z" fill="#6d6d6d"/><defs><radialGradient id="gglobe" cx="0.3" cy="0.3" r="0.8"><stop offset="0" stop-color="#f4fff0"/><stop offset="0.35" stop-color="#8fe060"/><stop offset="0.75" stop-color="#6fd040"/><stop offset="1" stop-color="#1a6a08"/></radialGradient></defs><circle cx="1116" cy="165.5" r="13" fill="url(#gglobe)" stroke="#000" stroke-width="1.5"/><path d="M1113.5 153V166M1115 165Q1120 160 1127 158.5" fill="none" stroke="#2a4a1a" stroke-width="0.8"/><path d="M1103.5 171Q1104.5 167 1107 165L1108 163.5L1109.5 164.5L1110.5 163L1112 164.5L1114 165.5L1115.5 168L1114 170L1112.5 172.5L1119 173L1124.5 172.5L1121.5 174.8L1114.5 175L1112.5 178Q1106.5 177 1103.5 171Z" fill="#000"/><path d="M1134 183.5 H1128 L1134 177.5Z" fill="#6d6d6d"/><defs><linearGradient id="ghelp2" x1="0" y1="0" x2="0" y2="1"><stop offset="0" stop-color="#5a78ec"/><stop offset="1" stop-color="#1c36a8"/></linearGradient></defs><circle cx="1151" cy="165.5" r="12.4" fill="url(#ghelp2)"/><text x="1151.5" y="175.8" font-family="Liberation Serif" font-weight="bold" font-size="23" fill="#fff" text-anchor="middle">?</text><path d="M1169 183.5 H1163 L1169 177.5Z" fill="#6d6d6d"/><path d="M72 240.5 H66 L72 234.5Z" fill="#6d6d6d"/><path d="M37 275.5 H31 L37 269.5Z" fill="#6d6d6d"/><path d="M72 275.5 H66 L72 269.5Z" fill="#6d6d6d"/><path d="M37 310.5 H31 L37 304.5Z" fill="#6d6d6d"/><path d="M72 310.5 H66 L72 304.5Z" fill="#6d6d6d"/><path d="M37 345.5 H31 L37 339.5Z" fill="#6d6d6d"/><path d="M72 345.5 H66 L72 339.5Z" fill="#6d6d6d"/><path d="M37 380.5 H31 L37 374.5Z" fill="#6d6d6d"/><path d="M72 380.5 H66 L72 374.5Z" fill="#6d6d6d"/><path d="M37 415.5 H31 L37 409.5Z" fill="#6d6d6d"/><path d="M72 415.5 H66 L72 409.5Z" fill="#6d6d6d"/><path d="M37 450.5 H31 L37 444.5Z" fill="#6d6d6d"/><path d="M72 450.5 H66 L72 444.5Z" fill="#6d6d6d"/><path d="M37 485.5 H31 L37 479.5Z" fill="#6d6d6d"/><path d="M72 485.5 H66 L72 479.5Z" fill="#6d6d6d"/><path d="M37 520.5 H31 L37 514.5Z" fill="#6d6d6d"/><path d="M37 590.5 H31 L37 584.5Z" fill="#6d6d6d"/><path d="M72 625.5 H66 L72 619.5Z" fill="#6d6d6d"/><path d="M72 660.5 H66 L72 654.5Z" fill="#6d6d6d"/><path d="M37 730.5 H31 L37 724.5Z" fill="#6d6d6d"/><path d="M72 730.5 H66 L72 724.5Z" fill="#6d6d6d"/><path d="M37 765.5 H31 L37 759.5Z" fill="#6d6d6d"/><path d="M72 765.5 H66 L72 759.5Z" fill="#6d6d6d"/><path d="M37 800.5 H31 L37 794.5Z" fill="#6d6d6d"/><path d="M72 800.5 H66 L72 794.5Z" fill="#6d6d6d"/><path d="M37 835.5 H31 L37 829.5Z" fill="#6d6d6d"/><path d="M72 835.5 H66 L72 829.5Z" fill="#6d6d6d"/><path d="M37 870.5 H31 L37 864.5Z" fill="#6d6d6d"/><path d="M13.5 213.5V231L17.5 227.5L21 233.5L24 232L20.5 226H26Z" fill="#fff" stroke="#111" stroke-width="1.3" stroke-linejoin="round"/><circle cx="53.5" cy="222.5" r="2.6" fill="#fff" stroke="#111" stroke-width="1.2"/><path d="M10.5 266L16.5 250.5L27.5 262.5" fill="none" stroke="#111" stroke-width="1.2"/><rect x="8.25" y="263.75" width="4.5" height="4.5" fill="#fff" stroke="#111" stroke-width="1.2"/><rect x="14.25" y="248.25" width="4.5" height="4.5" fill="#fff" stroke="#111" stroke-width="1.2"/><rect x="25.25" y="260.25" width="4.5" height="4.5" fill="#fff" stroke="#111" stroke-width="1.2"/><path d="M44 250.5H51C62 250.5 62 265.5 51 265.5H44" fill="none" stroke="#111" stroke-width="1.4"/><rect x="41.75" y="248.25" width="4.5" height="4.5" fill="#fff" stroke="#111" stroke-width="1.2"/><rect x="41.75" y="263.25" width="4.5" height="4.5" fill="#fff" stroke="#111" stroke-width="1.2"/><rect x="59.25" y="244.25" width="4.5" height="4.5" fill="#fff" stroke="#111" stroke-width="1.2"/><rect x="61.75" y="265.25" width="4.5" height="4.5" fill="#fff" stroke="#111" stroke-width="1.2"/><circle cx="18.5" cy="292" r="11" fill="none" stroke="#111" stroke-width="1.4"/><path d="M19 291.5L26.5 284" stroke="#111" stroke-width="0.8"/><rect x="16.75" y="289.25" width="4.5" height="4.5" fill="#fff" stroke="#111" stroke-width="1.2"/><rect x="24.25" y="281.75" width="4.5" height="4.5" fill="#fff" stroke="#111" stroke-width="1.2"/><ellipse cx="54" cy="292.5" rx="12" ry="7.3" fill="none" stroke="#111" stroke-width="1.4"/><path d="M54 286V294H65" fill="none" stroke="#111" stroke-width="0.8"/><rect x="51.75" y="283.25" width="4.5" height="4.5" fill="#fff" stroke="#111" stroke-width="1.2"/><rect x="51.75" y="291.75" width="4.5" height="4.5" fill="#fff" stroke="#111" stroke-width="1.2"/><rect x="62.75" y="291.75" width="4.5" height="4.5" fill="#fff" stroke="#111" stroke-width="1.2"/><path d="M10.5 316.5Q23 318 27.5 328" fill="none" stroke="#111" stroke-width="1.4"/><path d="M10.5 316.5V338L27.5 328" fill="none" stroke="#111" stroke-width="0.8"/><rect x="8.25" y="314.25" width="4.5" height="4.5" fill="#fff" stroke="#111" stroke-width="1.2"/><rect x="25.25" y="325.75" width="4.5" height="4.5" fill="#fff" stroke="#111" stroke-width="1.2"/><rect x="8.25" y="335.75" width="4.5" height="4.5" fill="#fff" stroke="#111" stroke-width="1.2"/><rect x="44" y="322" width="20" height="13.5" fill="none" stroke="#111" stroke-width="1.5"/><rect x="61.75" y="319.25" width="4.5" height="4.5" fill="#fff" stroke="#111" stroke-width="1.2"/><rect x="41.75" y="332.25" width="4.5" height="4.5" fill="#fff" stroke="#111" stroke-width="1.2"/><path d="M12 352H24.5L30 362.5L24.5 372H12L7 362.5Z" fill="none" stroke="#111" stroke-width="1.3"/><path d="M19 362H27.5" stroke="#111" stroke-width="0.8"/><rect x="16.75" y="359.75" width="4.5" height="4.5" fill="#fff" stroke="#111" stroke-width="1.2"/><rect x="25.25" y="359.75" width="4.5" height="4.5" fill="#fff" stroke="#111" stroke-width="1.2"/><path d="M57.5 352.5V361.5M50 352.5H64" fill="none" stroke="#999" stroke-width="0.8"/><path d="M44 352.5C57 352.5 64 358 64 371.5" fill="none" stroke="#111" stroke-width="2.2"/><rect x="41.75" y="350.25" width="4.5" height="4.5" fill="#fff" stroke="#111" stroke-width="1.2"/><rect x="61.75" y="369.25" width="4.5" height="4.5" fill="#fff" stroke="#111" stroke-width="1.2"/><path d="M14 388L29 388.5L22.5 408L9 401Z" fill="url(#gblue)" stroke="#111" stroke-width="1.3"/><path d="M21.5 388.3L16 404.5M11.5 394.5L26 398" stroke="#223" stroke-width="0.8"/><rect x="12.0" y="386.0" width="4" height="4" fill="#fff" stroke="#111" stroke-width="1.2"/><rect x="27.0" y="386.5" width="4" height="4" fill="#fff" stroke="#111" stroke-width="1.2"/><rect x="20.5" y="406.0" width="4" height="4" fill="#fff" stroke="#111" stroke-width="1.2"/><rect x="7.0" y="399.0" width="4" height="4" fill="#fff" stroke="#111" stroke-width="1.2"/><path d="M51.5 396L58 389Q63 393 63.5 399V400.5L55 404Q55 398 51.5 396Z" fill="url(#gblue)"/><path d="M42 392.5L49 386L55 387.5L58 389L51.5 396Z" fill="#fff"/><path d="M55 404L63.5 400.5V406.5L55 410Z" fill="#fff"/><path d="M42 392.5L49 386L55 387.5Q63 391 63.5 399V406.5L55 410V404Q55 398 51.5 396Z" fill="none" stroke="#111" stroke-width="1.3" stroke-linejoin="round"/><path d="M51.5 396L58 389" stroke="#111" stroke-width="0.7"/><path d="M8.5 425.5L18.5 421L29 425V439L18.5 443.5L8.5 439Z" fill="#6f90f0" stroke="#111" stroke-width="1.3"/><path d="M8.5 425.5L18.5 429.5L29 425L18.5 421Z" fill="#a9bffb" stroke="#111" stroke-width="0.8"/><path d="M18.5 429.5V443.5" stroke="#111" stroke-width="0.8"/><path d="M18.5 429.5L29 425V439L18.5 443.5Z" fill="#4a6ad8"/><circle cx="58.5" cy="428.5" r="8.8" fill="url(#gbs2)" stroke="#111" stroke-width="1.2"/><path d="M49.7 429.5Q58.5 433 67.3 429.5M58.5 419.7Q55 428.5 58 437.3" fill="none" stroke="#223" stroke-width="0.7"/><circle cx="49.5" cy="438.8" r="8.8" fill="url(#gbs2)" stroke="#111" stroke-width="1.2"/><path d="M40.7 439.5Q49.5 443 58.3 439.5M49.5 430Q46 438.8 49 447.6" fill="none" stroke="#223" stroke-width="0.7"/><ellipse cx="18.5" cy="458" rx="6.5" ry="3" fill="none" stroke="#111" stroke-width="1.2"/><path d="M5.5 465Q18.5 472 32.5 465V477Q18.5 484 5.5 477Z" fill="#6d8ff0" stroke="#111" stroke-width="1.2"/><ellipse cx="18.5" cy="474" rx="6.5" ry="3" fill="none" stroke="#fff" stroke-width="1.6"/><path d="M48 456L67 462L60 480L41 474Q45 468 43 465Z" fill="url(#gblue)" stroke="#111" stroke-width="1.3"/><path d="M54.5 458L49 477M61 460L54.5 479M46 465L64 470.5M44 470L62 475" stroke="#223" stroke-width="0.7"/><path d="M8 494H13Q13 490 16 490Q19 490 19 494H23V500Q27 500 27 503Q27 506 23 506V511H17Q17 508 14 508Q11 508 11 511H6V505Q9 505 9 502Q9 499 6 499Z" fill="#f5a800" stroke="#111" stroke-width="1"/><path d="M17 503H22Q22 499.5 25 499.5Q28 499.5 28 503H32V509Q29 509 29 511.5Q29 514 32 514V518H26Q26 515 23 515Q20 515 20 518H15V512Q18 512 18 509Q18 506 15 506Z" fill="#fff" stroke="#111" stroke-width="1"/><path d="M40 517L40.5 499L46 507.5L60 491.5L54 508L67.5 509.5L54 515.5L59.5 517Z" fill="url(#gorange)" stroke="#7a2a00" stroke-width="0.7"/><rect x="5.5" y="537" width="14" height="7" fill="#fff" stroke="#111" stroke-width="1.2"/><path d="M17.5 527H26.5L19.5 544Z" fill="#16237a"/><path d="M20 542L23.5 538.5L30 545L26 549.5Z" fill="#fff" stroke="#111" stroke-width="1.2"/><rect x="41.5" y="539" width="23" height="7" fill="#fff" stroke="#111" stroke-width="1.2"/><path d="M53.5 529H62L54.5 546Z" fill="#16237a"/><circle cx="18.5" cy="568.5" r="6.2" fill="#6f90f0" stroke="#111" stroke-width="2"/><circle cx="14" cy="576" r="6.2" fill="#fff" stroke="#111" stroke-width="2"/><circle cx="23.5" cy="576" r="6.2" fill="#16237a" stroke="#111" stroke-width="2"/><circle cx="54" cy="567.5" r="4.2" fill="#6f90f0" stroke="#111" stroke-width="0.9"/><circle cx="47.5" cy="578" r="4.2" fill="#fff" stroke="#111" stroke-width="0.9"/><circle cx="60.5" cy="578" r="4.2" fill="#16237a" stroke="#111" stroke-width="0.9"/><path d="M6 601.5H12Q22 601 25.5 614" fill="none" stroke="#111" stroke-width="1.8"/><path d="M25 614L24 620" stroke="#111" stroke-width="2"/><rect x="10.0" y="599.5" width="4" height="4" fill="#fff" stroke="#111" stroke-width="1.2"/><rect x="23.5" y="612.0" width="4" height="4" fill="#fff" stroke="#111" stroke-width="1.2"/><path d="M41 601.5Q57 602 59.5 620" fill="none" stroke="#111" stroke-width="2.4"/><path d="M40 597.5H50M53 599L62 604L65 611L65 620" fill="none" stroke="#111" stroke-width="0.9" stroke-dasharray="1.3 1.3"/><rect x="48.0" y="594.5" width="4" height="4" fill="#fff" stroke="#111" stroke-width="1.2"/><rect x="63.0" y="609.0" width="4" height="4" fill="#fff" stroke="#111" stroke-width="1.2"/><path d="M8 630.5H28.5L29 639L26 635.5H21V652L24 655.5H13L16 652V635.5H11L8 639Z" fill="#6f90f0" stroke="#111" stroke-width="1.2"/><rect x="43.5" y="645.5" width="8" height="8" fill="#f2f2f2" stroke="#111" stroke-width="1.1"/><rect x="58" y="630.5" width="8" height="8" fill="#6f90f0" stroke="#111" stroke-width="1.1"/><path d="M50 645L57 638.5M53.5 638.5H57V642" fill="none" stroke="#111" stroke-width="1.1"/><rect x="8.5" y="666.5" width="7" height="7" fill="#7d98f2" stroke="#111" stroke-width="1.1"/><rect x="23.5" y="669.5" width="7.5" height="7.5" fill="#7d98f2" stroke="#111" stroke-width="1.1"/><rect x="18.5" y="674" width="7.5" height="7.5" fill="#7d98f2" stroke="#111" stroke-width="1.1"/><rect x="8.5" y="681" width="7" height="7" fill="#f0f0f0" stroke="#111" stroke-width="1.1"/><rect x="23.5" y="683.5" width="7.5" height="7.5" fill="#7d98f2" stroke="#111" stroke-width="1.1"/><rect x="40.5" y="666.5" width="6.5" height="17" fill="#f0f0f0" stroke="#111" stroke-width="1.1"/><path d="M50 681L63.5 671.5L67.5 676L54 685.5Z" fill="#7d98f2" stroke="#111" stroke-width="1.1" stroke-linejoin="round"/><path d="M47.5 667.5Q55 665 59 671.5M55.5 671.5H59.5V667.5" fill="none" stroke="#111" stroke-width="1.1"/><path d="M8.5 705L18.5 701L29 705V719L18.5 725L8.5 719Z" fill="#5c7ee8" stroke="#111" stroke-width="1.3"/><path d="M8.5 705L18.5 709L29 705L18.5 701Z" fill="#a9bffb" stroke="#111" stroke-width="0.8"/><path d="M16 716L23 713V722L16 725Z" fill="#fff" stroke="#111" stroke-width="0.8"/><path d="M41 721.5L47 715H67.5L61.5 721.5Z" fill="#6f90f0" stroke="#111" stroke-width="1"/><path d="M46 716V705M54 716V705M61.5 716V705" stroke="#9a9a9a" stroke-width="1.8"/><path d="M43.5 706L46 702L48.5 706ZM51.5 706L54 702L56.5 706ZM59 706L61.5 702L64 706Z" fill="#9a9a9a"/><rect x="6.8" y="735.8" width="5.6" height="5.6" fill="#7d98f2" stroke="#111" stroke-width="1"/><rect x="6.8" y="744.4" width="5.6" height="5.6" fill="#7d98f2" stroke="#111" stroke-width="1"/><rect x="6.8" y="753.0" width="5.6" height="5.6" fill="#f0f0f0" stroke="#111" stroke-width="1"/><rect x="15.399999999999999" y="735.8" width="5.6" height="5.6" fill="#7d98f2" stroke="#111" stroke-width="1"/><rect x="15.399999999999999" y="744.4" width="5.6" height="5.6" fill="#7d98f2" stroke="#111" stroke-width="1"/><rect x="15.399999999999999" y="753.0" width="5.6" height="5.6" fill="#7d98f2" stroke="#111" stroke-width="1"/><rect x="24.0" y="735.8" width="5.6" height="5.6" fill="#7d98f2" stroke="#111" stroke-width="1"/><rect x="24.0" y="744.4" width="5.6" height="5.6" fill="#7d98f2" stroke="#111" stroke-width="1"/><rect x="24.0" y="753.0" width="5.6" height="5.6" fill="#7d98f2" stroke="#111" stroke-width="1"/><rect x="48.5" y="736" width="11" height="6" fill="#eee" stroke="#111" stroke-width="1.1"/><rect x="50.5" y="744.5" width="7" height="6" fill="#ddd" stroke="#111" stroke-width="1"/><rect x="49.2" y="753" width="9" height="7" fill="#eee" stroke="#111" stroke-width="1.1"/><path d="M54 734V761.5" stroke="#e00" stroke-width="1.5"/><path d="M8.5 771L15 769V789L8.5 789.5Z" fill="#fff" stroke="#111" stroke-width="1.2"/><path d="M16 774L24.5 770L30 775L22 797L13 793Z" fill="#6f90f0" stroke="#111" stroke-width="1.2"/><rect x="50" y="769" width="4.5" height="28" fill="#6f90f0" stroke="#111" stroke-width="1"/><circle cx="42" cy="776" r="2.4" fill="#111"/><circle cx="60" cy="776" r="2.4" fill="#111"/><path d="M41 779L43 786H49L47 796M58.5 779L58 787L63 792L67 797" fill="none" stroke="#111" stroke-width="1.8"/><path d="M7 819.5L11.5 817.5L13.5 822.5Q20 812 31 806Q22 815 13 829.5Z" fill="#000"/><path d="M42 813L48.5 808.5L57 811V821.5L51 825L42 821.5Z" fill="#d0d0d0" stroke="#111" stroke-width="1.1" stroke-linejoin="round"/><path d="M42 813L51 816L57 811L48.5 808.5Z" fill="#efefef"/><path d="M51 816V825L57 821.5V811Z" fill="#7a7a7a"/><path d="M42 813L51 816L57 811M51 816V825" fill="none" stroke="#111" stroke-width="0.8"/><path d="M59 809.5L66 823.5Q66.5 827.5 60 827.5Q54 827.5 54 823Z" fill="#d8d8d8" stroke="#111" stroke-width="1.1" stroke-linejoin="round"/><path d="M59 809.5L61 827" stroke="#999" stroke-width="1.5"/><path d="M16 846.5L21 840L27.5 839H31V845H28L23 847.5L18 848Z" fill="#fff" stroke="#111" stroke-width="1"/><path d="M17 845L21 841M19 846.5L23 842M21.5 847L25 843" stroke="#777" stroke-width="0.8"/><rect x="30.5" y="839" width="2.5" height="7" fill="#111"/><path d="M18.5 849.5L28.5 859L20.5 866.5L8 861Z" fill="#e6c048" stroke="#111" stroke-width="1.2" stroke-linejoin="round"/><path d="M18.5 849.5L20.5 866.5L28.5 859Z" fill="#c89e28"/><path d="M18.5 849.5L28.5 859L20.5 866.5L8 861Z" fill="none" stroke="#111" stroke-width="1.2" stroke-linejoin="round"/><path d="M8.5 860.5L18.5 850L12 860Z" fill="#f4d870"/><rect x="383" y="337" width="458" height="1" fill="#000"/><rect x="383" y="516" width="458" height="1" fill="#000"/><rect x="383" y="337" width="1" height="180" fill="#000"/><rect x="840" y="337" width="1" height="180" fill="#000"/><rect x="383" y="380" width="458" height="1" fill="#000"/><rect x="383" y="478" width="458" height="1" fill="#000"/><rect x="383" y="482" width="159" height="1" fill="#000"/><rect x="513" y="337" width="1" height="44" fill="#000"/><rect x="617" y="337" width="1" height="44" fill="#000"/><rect x="628" y="337" width="1" height="44" fill="#000"/><rect x="705" y="337" width="1" height="44" fill="#000"/><rect x="716" y="337" width="1" height="44" fill="#000"/><rect x="513" y="380" width="1" height="99" fill="#000"/><rect x="742" y="337" width="1" height="180" fill="#000"/><rect x="591" y="478" width="1" height="39" fill="#000"/><rect x="617" y="478" width="1" height="39" fill="#000"/><rect x="629" y="478" width="1" height="39" fill="#000"/><rect x="705" y="478" width="1" height="39" fill="#000"/><rect x="716" y="478" width="1" height="39" fill="#000"/><rect x="742" y="424" width="99" height="1" fill="#000"/><rect x="742" y="435" width="99" height="1" fill="#000"/><rect x="516" y="383" width="224" height="1" fill="#000"/><rect x="516" y="383" width="1" height="93" fill="#000"/><rect x="516" y="475" width="224" height="1" fill="#000"/><rect x="739" y="383" width="1" height="93" fill="#000"/><rect x="738" y="383" width="1" height="30" fill="#000"/><rect x="722" y="384" width="18" height="1" fill="#000"/><rect x="541" y="380" width="1" height="99" fill="#000"/><rect x="652" y="380" width="1" height="4" fill="#000"/><rect x="661" y="380" width="1" height="4" fill="#000"/><path d="M590.5 383V386.5H595.5V383" fill="none" stroke="#000" stroke-width="1"/><path d="M590.5 475.5V472.5H595.5V475.5" fill="none" stroke="#000" stroke-width="1"/><rect x="629" y="399" width="1" height="77" fill="#000"/><rect x="629" y="399" width="14" height="1" fill="#000"/><rect x="630" y="402" width="13" height="1" fill="#000"/><rect x="642" y="402" width="1" height="74" fill="#000"/><rect x="645" y="402" width="1" height="74" fill="#000"/><path d="M659.5 401.5H663.5V408.5H659.5Z" fill="none" stroke="#000" stroke-width="1"/><rect x="661" y="408" width="1" height="13" fill="#000"/><rect x="645" y="420" width="17" height="1" fill="#000"/><rect x="663" y="408" width="1" height="17" fill="#000"/><rect x="645" y="424" width="19" height="1" fill="#000"/><rect x="645" y="448" width="18" height="1" fill="#000"/><rect x="645" y="450" width="18" height="1" fill="#000"/><rect x="662" y="445" width="2" height="13" fill="#000"/><rect x="679" y="383" width="1" height="93" fill="#000"/><rect x="682" y="436" width="1" height="40" fill="#000"/><rect x="682" y="414" width="1" height="8" fill="#000"/><rect x="682" y="396" width="1" height="17" fill="#000"/><rect x="681" y="383" width="1" height="13" fill="#000"/><rect x="684" y="383" width="1" height="13" fill="#000"/><rect x="686" y="383" width="1" height="13" fill="#000"/><rect x="679" y="395" width="8" height="2" fill="#000"/><rect x="721" y="384" width="1" height="13" fill="#000"/><rect x="723" y="384" width="1" height="13" fill="#000"/><rect x="721" y="396" width="3" height="1" fill="#000"/><rect x="682" y="411" width="15" height="2" fill="#000"/><rect x="696" y="412" width="44" height="1" fill="#000"/><rect x="682" y="414" width="58" height="1" fill="#000"/><path d="M720.5 412V409.5H723.5V412" fill="none" stroke="#000" stroke-width="1"/><rect x="682" y="421" width="15" height="2" fill="#000"/><path d="M661.3 383.5A17.2 17.2 0 0 0 678.5 400.7" fill="none" stroke="#000" stroke-width="1.2"/><path d="M679.5 395.5A16.5 16.5 0 0 1 696 412" fill="none" stroke="#000" stroke-width="1.6"/><path d="M696 421A13.8 13.8 0 0 1 682.2 434.8" fill="none" stroke="#000" stroke-width="1.6"/><circle cx="645.4" cy="402.1" r="2.8" fill="#fff" stroke="#333" stroke-width="0.8"/><circle cx="631.6" cy="474.5" r="2.8" fill="#fff" stroke="#333" stroke-width="0.8"/><rect x="420" y="557" width="407" height="1" fill="#000"/><rect x="420" y="729" width="407" height="1" fill="#000"/><rect x="420" y="557" width="1" height="173" fill="#000"/><rect x="826" y="557" width="1" height="173" fill="#000"/><rect x="591" y="557" width="1" height="138" fill="#000"/><rect x="616" y="557" width="1" height="115" fill="#000"/><rect x="628" y="557" width="1" height="115" fill="#000"/><rect x="705" y="557" width="1" height="113" fill="#000"/><rect x="716" y="557" width="1" height="115" fill="#000"/><rect x="742" y="557" width="1" height="139" fill="#000"/><rect x="878" y="555" width="252" height="1" fill="#000"/><rect x="878" y="725" width="252" height="1" fill="#000"/><rect x="878" y="555" width="1" height="171" fill="#000"/><rect x="1129" y="555" width="1" height="171" fill="#000"/><rect x="913" y="555" width="1" height="136" fill="#000"/><rect x="1010" y="555" width="1" height="136" fill="#000"/><rect x="913" y="690" width="98" height="1" fill="#000"/><rect x="955" y="555" width="1" height="116" fill="#000"/><rect x="967" y="555" width="1" height="116" fill="#000"/><rect x="955" y="670" width="13" height="1" fill="#000"/><path d="M913.5 606.5L961.7 568.8L1010.5 606" fill="none" stroke="#000" stroke-width="1.2"/><path d="M367 850V810.5M361 819.5L367 810.5L373 819.5" fill="none" stroke="#43a043" stroke-width="2"/><path d="M367.5 850H407M397.5 843.5L407 850L397.5 856.5" fill="none" stroke="#a34848" stroke-width="2"/><g transform="translate(1532.3 232.1) scale(1.0)"><path d="M0 0L15 2.8L14.6 7.2L6.5 14.2L0.4 6.2Z" fill="#fff" stroke="#1a1a1a" stroke-width="1"/><path d="M0.3 0.3L14.8 3L14.6 5.4L1.2 5.2Z" fill="#ff7a48"/><path d="M1.5 5.3L14.6 5.4L14.5 7L2.2 7Z" fill="#e82020"/><path d="M0.5 6.3L6.5 14L8.5 12.5L2 6.6Z" fill="#2a44b8"/><path d="M0 0L15 2.8L14.6 7.2L6.5 14.2L0.4 6.2Z" fill="none" stroke="#1a1a1a" stroke-width="1"/></g><path d="M1544.4 240V247M1540.9 243.5H1547.9" stroke="#fff" stroke-width="3.6"/><path d="M1544.4 240.3V246.7M1541.2 243.5H1547.6" stroke="#111" stroke-width="2"/><g transform="translate(1559.8 230.5) scale(0.65)"><path d="M0 0L15 2.8L14.6 7.2L6.5 14.2L0.4 6.2Z" fill="#fff" stroke="#1a1a1a" stroke-width="1"/><path d="M0.3 0.3L14.8 3L14.6 5.4L1.2 5.2Z" fill="#ff7a48"/><path d="M1.5 5.3L14.6 5.4L14.5 7L2.2 7Z" fill="#e82020"/><path d="M0.5 6.3L6.5 14L8.5 12.5L2 6.6Z" fill="#2a44b8"/><path d="M0 0L15 2.8L14.6 7.2L6.5 14.2L0.4 6.2Z" fill="none" stroke="#1a1a1a" stroke-width="1"/></g><g transform="translate(1568 237.8) scale(0.65)"><path d="M0 0L15 2.8L14.6 7.2L6.5 14.2L0.4 6.2Z" fill="#fff" stroke="#1a1a1a" stroke-width="1"/><path d="M0.3 0.3L14.8 3L14.6 5.4L1.2 5.2Z" fill="#a8b8f8"/><path d="M1.5 5.3L14.6 5.4L14.5 7L2.2 7Z" fill="#e82020"/><path d="M0.5 6.3L6.5 14L8.5 12.5L2 6.6Z" fill="#2a44b8"/><path d="M0 0L15 2.8L14.6 7.2L6.5 14.2L0.4 6.2Z" fill="none" stroke="#1a1a1a" stroke-width="1"/></g><path d="M1561.3 240V245.8H1565.5" fill="none" stroke="#111" stroke-width="1.1"/><path d="M1565 244L1567 245.8L1565 247.6Z" fill="#111"/><path d="M1587.5 231.5L1601.5 246.5M1601.5 231.5L1587.5 246.5" stroke="#d40000" stroke-width="2.8"/><circle cx="1620.5" cy="239" r="7.3" fill="none" stroke="#b8b8b8" stroke-width="1.1"/><path d="M1617.5 236L1623 233.5L1630 237V244Q1627 247.5 1623 247.5L1618.5 244Z" fill="#d4d4d4" stroke="#b0b0b0" stroke-width="1"/><path d="M1622 231.5L1624 234L1621 235" fill="none" stroke="#aaa" stroke-width="0.9"/><defs><linearGradient id="gtri" x1="0" y1="0" x2="0" y2="1"><stop offset="0" stop-color="#c0ccff"/><stop offset="1" stop-color="#6a88ec"/></linearGradient></defs><path d="M1642 242.3L1650 232.7L1658 242.3Z" fill="url(#gtri)" stroke="#1c2a70" stroke-width="1.2" stroke-linejoin="round"/><path d="M1670 234.2H1686L1678 244.3Z" fill="url(#gtri)" stroke="#1c2a70" stroke-width="1.2" stroke-linejoin="round"/><path d="M1709 231.5V247.5L1699.5 239.5Z" fill="#dcdcdc" stroke="#b0b0b0" stroke-width="1"/><path d="M1724 231.5H1740L1734 239V247.5H1730V239Z" fill="#6f90f0" stroke="#1c2f80" stroke-width="1"/><rect x="1752.5" y="231.5" width="14" height="17" fill="#fff" stroke="#777" stroke-width="1"/><path d="M1752.5 233H1766.5" stroke="#555" stroke-width="2"/><path d="M1757 232V248.5M1762 232V248.5M1752.5 237.5H1766.5M1752.5 243H1766.5" stroke="#888" stroke-width="0.9"/><path d="M1781 232.5H1795M1781 239H1795M1781 245.5H1795" stroke="#111" stroke-width="2.2" stroke-linecap="round"/><circle cx="1815" cy="239" r="9.2" fill="url(#ghelp2)"/><text x="1815.3" y="246.5" font-family="Liberation Serif" font-weight="bold" font-size="17" fill="#fff" text-anchor="middle">?</text><g transform="translate(1896.5 232.5) scale(1.0)"><path d="M0 0L15 2.8L14.6 7.2L6.5 14.2L0.4 6.2Z" fill="#fff" stroke="#1a1a1a" stroke-width="1"/><path d="M0.3 0.3L14.8 3L14.6 5.4L1.2 5.2Z" fill="#ff7a48"/><path d="M1.5 5.3L14.6 5.4L14.5 7L2.2 7Z" fill="#e82020"/><path d="M0.5 6.3L6.5 14L8.5 12.5L2 6.6Z" fill="#2a44b8"/><path d="M0 0L15 2.8L14.6 7.2L6.5 14.2L0.4 6.2Z" fill="none" stroke="#1a1a1a" stroke-width="1"/></g><circle cx="1904" cy="285" r="7.9" fill="none" stroke="#222" stroke-width="1"/><circle cx="1904" cy="285" r="4.6" fill="#d9dadf" stroke="#444" stroke-width="0.6"/><defs><linearGradient id="gscr" x1="0" y1="0" x2="1" y2="1"><stop offset="0" stop-color="#f4f4f4"/><stop offset="1" stop-color="#9a9a9a"/></linearGradient></defs><rect x="1895.5" y="321.5" width="17" height="13" fill="url(#gscr)" stroke="#111" stroke-width="1.8"/><path d="M1901 336.5H1907" stroke="#111" stroke-width="2.2"/><rect x="1895" y="369.5" width="18" height="12" rx="2" fill="#2a2a2a"/><rect x="1899" y="367" width="7" height="3.5" rx="1" fill="#2a2a2a"/><circle cx="1905" cy="375.5" r="4.2" fill="#3a4a7a" stroke="#bbb" stroke-width="0.9"/><circle cx="1904" cy="374.5" r="1.2" fill="#9ab"/><rect x="1895.5" y="412.5" width="17" height="14.5" fill="#eee" stroke="#333" stroke-width="1.2"/><path d="M1899.5 413V427M1903.5 413V427M1907.5 413V427M1895.5 416.5H1912.5M1895.5 420.5H1912.5M1895.5 424H1912.5" stroke="#777" stroke-width="0.7"/><path d="M1901 413V421H1911" fill="none" stroke="#2a2" stroke-width="1"/><path d="M1901 421H1911" stroke="#d11" stroke-width="1"/></svg>
</body></html>
